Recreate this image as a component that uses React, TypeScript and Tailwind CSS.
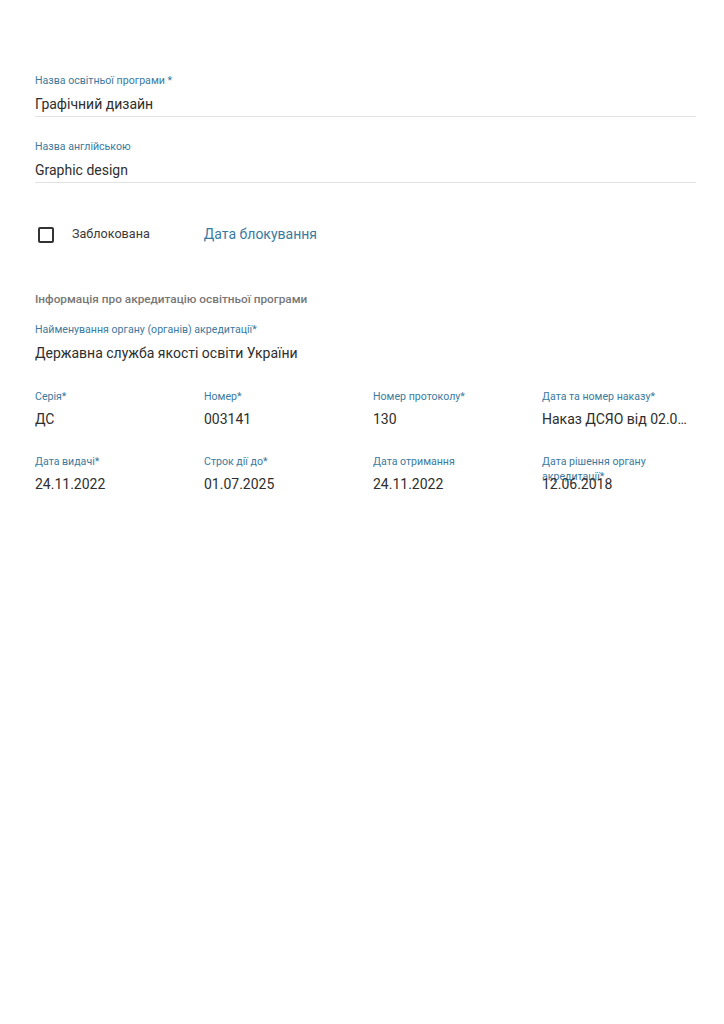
const labelCls = "block text-[10.6px] leading-[14px] text-[#3b7aa0]";
const valueCls = "text-[14px] leading-[18px] text-[#2e2e2e]";

function Field({ label, value, line = false }: { label: string; value: string; line?: boolean }) {
  return (
    <div className={line ? "border-b border-[#e2e2e2] pb-[3px]" : ""}>
      <span className={labelCls}>{label}</span>
      <div className={`mt-[7px] ${valueCls}`}>{value}</div>
    </div>
  );
}

function GridField({ label, value }: { label: string; value: string }) {
  return (
    <div className="relative h-[36px] pr-[20px]">
      <span className="absolute left-0 top-0 block w-[115px] text-[10.6px] leading-[15px] text-[#3b7aa0]">
        {label}
      </span>
      <div className={`absolute left-0 right-[20px] top-[21px] truncate ${valueCls}`}>{value}</div>
    </div>
  );
}

export default function App() {
  return (
    <div className="min-h-[1024px] w-[724px] bg-white px-[35px] pt-[74px] font-['Roboto',sans-serif]">
      <div className="w-[661px]">
        <Field label="Назва освітньої програми *" value="Графічний дизайн" line />
        <div className="mt-[23px]">
          <Field label="Назва англійською" value="Graphic design" line />
        </div>

        <div className="mt-[41px] flex items-center">
          <span className="ml-[3px] h-[16px] w-[16px] rounded-[2px] border-2 border-[#333]" />
          <span className="ml-[18px] text-[12.6px] text-[#3a3a3a]">Заблокована</span>
          <span className="ml-[54px] text-[14px] text-[#3b7aa0]">Дата блокування</span>
        </div>

        <div className="mt-[46px] text-[11.8px] font-medium text-[#777]">
          Інформація про акредитацію освітньої програми
        </div>

        <div className="mt-[14px]">
          <span className={labelCls}>Найменування органу (органів) акредитації*</span>
          <div className={`mt-[7px] ${valueCls}`}>Державна служба якості освіти України</div>
        </div>

        <div className="mt-[27px] grid w-[676px] grid-cols-4 gap-y-[29px]">
          <GridField label="Серія*" value="ДС" />
          <GridField label="Номер*" value="003141" />
          <GridField label="Номер протоколу*" value="130" />
          <GridField label="Дата та номер наказу*" value="Наказ ДСЯО від 02.08.2022 № 123" />
          <GridField label="Дата видачі*" value="24.11.2022" />
          <GridField label="Строк дії до*" value="01.07.2025" />
          <GridField label="Дата отримання" value="24.11.2022" />
          <GridField label="Дата рішення органу акредитації*" value="12.06.2018" />
        </div>
      </div>
    </div>
  );
}
